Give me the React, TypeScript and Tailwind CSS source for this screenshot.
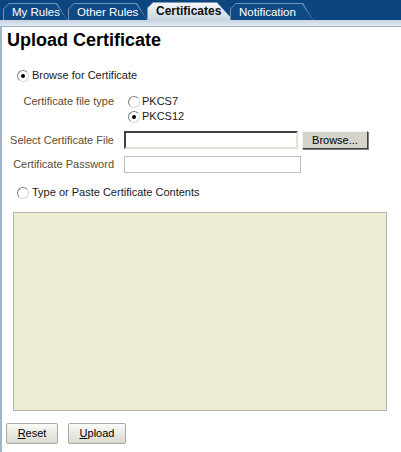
function Tab({ label, active, w, ml }: { label: string; active?: boolean; w: string; ml: string }) {
  if (active) {
    return (
      <div className={`relative h-[18px] ${w} ${ml} bg-[#7f9ab4] pl-[1px] pt-[1px] [clip-path:polygon(0_100%,0_6px,6px_0,calc(100%-16px)_0,100%_100%)]`}>
        <div className="flex h-full items-center whitespace-nowrap bg-gradient-to-b from-[#f2f6f9] to-[#c9d6e1] pl-[8px] text-[12px] font-bold text-[#101010] [clip-path:polygon(0_100%,0_5px,5px_0,calc(100%-16px)_0,100%_100%)]">
          {label}
        </div>
      </div>
    );
  }
  return (
    <div className={`relative h-[17px] ${w} ${ml} bg-[#6f93b8] pl-[1px] pt-[1px] [clip-path:polygon(0_100%,0_6px,6px_0,calc(100%-10px)_0,100%_100%)]`}>
      <div className="flex h-full items-center whitespace-nowrap bg-[#0f4a85] pl-[8px] text-[11.5px] text-white [clip-path:polygon(0_100%,0_5px,5px_0,calc(100%-11px)_0,100%_100%)]">
        {label}
      </div>
    </div>
  );
}

function Radio({ checked }: { checked?: boolean }) {
  return (
    <span className="flex h-[12px] w-[12px] shrink-0 items-center justify-center rounded-full border border-t-[#808080] border-l-[#808080] border-b-[#d8d8d8] border-r-[#d8d8d8] bg-white">
      {checked && <span className="h-[4px] w-[4px] rounded-full bg-black" />}
    </span>
  );
}

function Label({ children }: { children: React.ReactNode }) {
  return <div className="w-[112px] shrink-0 text-right text-[#5e4b2e]">{children}</div>;
}

export default function App() {
  return (
    <div className="h-[452px] w-[401px] overflow-hidden bg-white font-['Liberation_Sans',Arial,sans-serif] text-[11px] leading-[13px] text-[#1a1a1a]">
      <div className="flex h-[20px] items-end bg-[#0b4680]">
        <Tab label="My Rules" w="w-[64px]" ml="ml-[3px]" />
        <Tab label="Other Rules" w="w-[79px]" ml="ml-[1px]" />
        <Tab label="Certificates" active w="w-[86px]" ml="ml-[0px]" />
        <Tab label="Notification" w="w-[83px]" ml="ml-[-3px]" />
      </div>
      <div className="h-[7px] border-b border-[#9fb3c7] bg-gradient-to-b from-[#c6d4e2] to-[#e3eaf1]" />
      <div className="flex h-[425px] flex-col border-l-2 border-[#a3b6c9]">
        <h1 className="ml-[5px] mt-[2px] text-[18px] leading-[22px] font-bold text-black">Upload Certificate</h1>

        <div className="ml-[15px] mt-[18px] flex items-center gap-[3px]">
          <Radio checked />
          <span>Browse for Certificate</span>
        </div>

        <div className="mt-[13px] flex">
          <Label>Certificate file type</Label>
          <div className="ml-[14px] flex flex-col gap-[2px]">
            <div className="flex items-center gap-[2px]">
              <Radio />
              <span>PKCS7</span>
            </div>
            <div className="flex items-center gap-[2px]">
              <Radio checked />
              <span>PKCS12</span>
            </div>
          </div>
        </div>

        <div className="mt-[8px] flex items-center">
          <Label>Select Certificate File</Label>
          <div className="ml-[10px] h-[18px] w-[174px] border-2 border-t-[#404040] border-l-[#404040] border-b-[#e4e2d6] border-r-[#e4e2d6] bg-white" />
          <button className="ml-[4px] h-[18px] w-[66px] border border-t-[#f4f4f0] border-l-[#f4f4f0] border-b-[#404040] border-r-[#404040] bg-[#d6d3cc] text-[11px] text-black shadow-[1px_1px_0_#808080]">
            Browse...
          </button>
        </div>

        <div className="mt-[7px] flex items-center">
          <Label>Certificate Password</Label>
          <div className="ml-[10px] h-[17px] w-[177px] border border-[#bdbcb0] bg-white" />
        </div>

        <div className="ml-[15px] mt-[13px] flex items-center gap-[3px]">
          <Radio />
          <span>Type or Paste Certificate Contents</span>
        </div>

        <div className="ml-[11px] mt-[13px] h-[199px] w-[374px] border border-[#b4b4ac] bg-[#edebd2]" />

        <div className="ml-[4px] mt-[12px] flex gap-[10px]">
          <button className="h-[21px] w-[52px] rounded-[2px] border border-[#a8a8a0] bg-gradient-to-b from-[#fbfbf8] to-[#d9d9d0] text-[11px] text-black">
            <span className="underline">R</span>eset
          </button>
          <button className="h-[21px] w-[58px] rounded-[2px] border border-[#a8a8a0] bg-gradient-to-b from-[#fbfbf8] to-[#d9d9d0] text-[11px] text-black">
            <span className="underline">U</span>pload
          </button>
        </div>
      </div>
    </div>
  );
}
